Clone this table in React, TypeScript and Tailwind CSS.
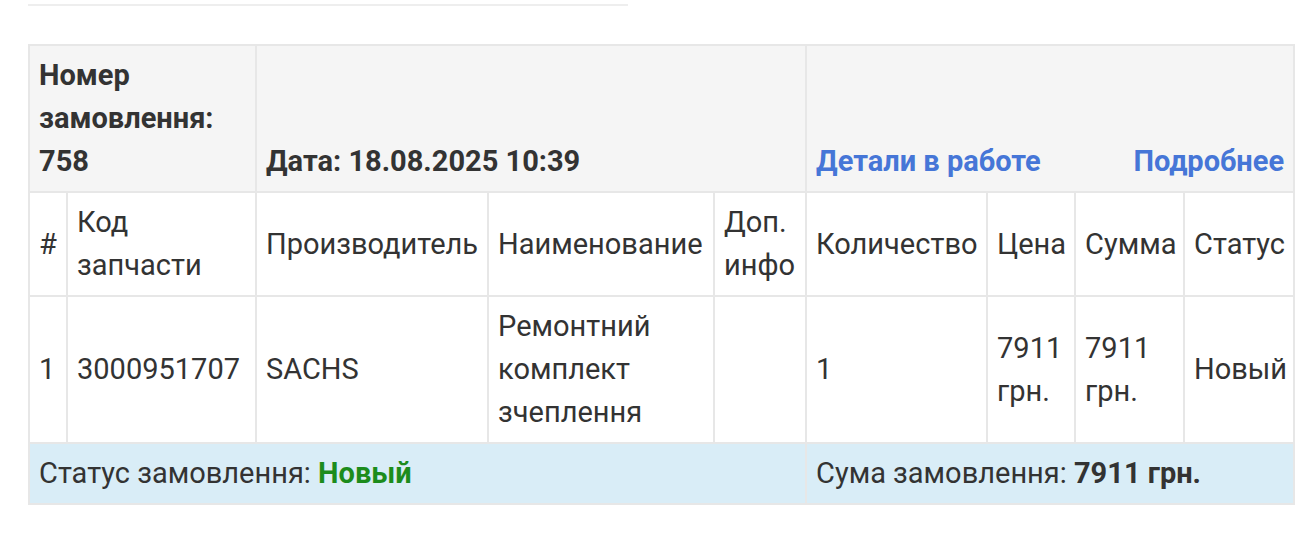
import React from "react";

const cell = "border-2 border-[#e7e7e7] pl-[9px] pr-[9px] py-[8px]";

export default function App() {
  return (
    <div
      className="w-[1296px] h-[537px] bg-white text-[#333333] overflow-hidden"
      style={{ fontFamily: "Roboto, 'Noto Sans', sans-serif" }}
    >
      <div className="ml-[28px] mt-[4px] w-[600px] h-[2px] bg-[#eeeeee]" />
      <table className="ml-[28px] mt-[38px] w-[1265px] table-fixed border-collapse text-[29px] leading-[43px] whitespace-nowrap">
        <colgroup>
          <col className="w-[38px]" />
          <col className="w-[189px]" />
          <col className="w-[232px]" />
          <col className="w-[226px]" />
          <col className="w-[92px]" />
          <col className="w-[181px]" />
          <col className="w-[88px]" />
          <col className="w-[109px]" />
          <col className="w-[110px]" />
        </colgroup>
        <thead>
          <tr className="bg-[#f5f5f5] font-bold">
            <th colSpan={2} className={`${cell} text-left align-bottom`}>
              Номер
              <br />
              замовлення:
              <br />
              758
            </th>
            <th colSpan={3} className={`${cell} text-left align-bottom`}>
              Дата: 18.08.2025 10:39
            </th>
            <th colSpan={4} className={`${cell} align-bottom`}>
              <div className="flex justify-between text-[#4676d7]">
                <a href="#">Детали в работе</a>
                <a href="#">Подробнее</a>
              </div>
            </th>
          </tr>
        </thead>
        <tbody>
          <tr className="align-middle">
            <td className={cell}>#</td>
            <td className={cell}>
              Код
              <br />
              запчасти
            </td>
            <td className={cell}>Производитель</td>
            <td className={cell}>Наименование</td>
            <td className={cell}>
              Доп.
              <br />
              инфо
            </td>
            <td className={cell}>Количество</td>
            <td className={cell}>Цена</td>
            <td className={cell}>Сумма</td>
            <td className={cell}>Статус</td>
          </tr>
          <tr className="align-middle">
            <td className={cell}>1</td>
            <td className={cell}>3000951707</td>
            <td className={cell}>SACHS</td>
            <td className={cell}>
              Ремонтний
              <br />
              комплект
              <br />
              зчеплення
            </td>
            <td className={cell}></td>
            <td className={cell}>1</td>
            <td className={cell}>
              7911
              <br />
              грн.
            </td>
            <td className={cell}>
              7911
              <br />
              грн.
            </td>
            <td className={cell}>Новый</td>
          </tr>
          <tr className="bg-[#d9edf7]">
            <td colSpan={5} className={cell}>
              Статус замовлення:{" "}
              <b className="text-[#1c8c1c]">Новый</b>
            </td>
            <td colSpan={4} className={cell}>
              Сума замовлення: <b>7911 грн.</b>
            </td>
          </tr>
        </tbody>
      </table>
    </div>
  );
}
